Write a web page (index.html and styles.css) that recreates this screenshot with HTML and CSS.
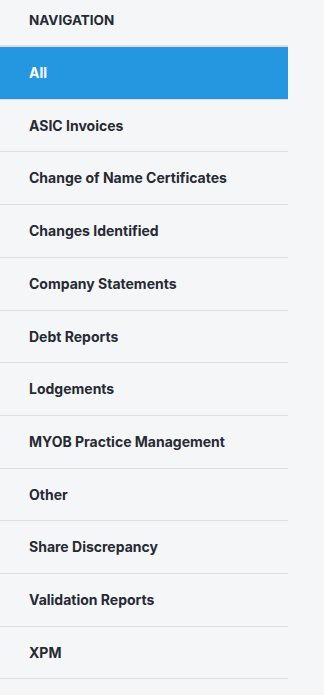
FILE: index.html
```html
<!DOCTYPE html>
<html lang="en">
  <head>
    <meta charset="UTF-8" />
    <title>Navigation</title>
    <link rel="stylesheet" href="styles.css">
  </head>
  <body>
    <div class="sidebar">
      <div class="nav-header">NAVIGATION</div>
      <ul class="nav-list">
        <li class="nav-item active">All</li>
        <li class="nav-item">ASIC Invoices</li>
        <li class="nav-item">Change of Name Certificates</li>
        <li class="nav-item">Changes Identified</li>
        <li class="nav-item">Company Statements</li>
        <li class="nav-item">Debt Reports</li>
        <li class="nav-item">Lodgements</li>
        <li class="nav-item">MYOB Practice Management</li>
        <li class="nav-item">Other</li>
        <li class="nav-item">Share Discrepancy</li>
        <li class="nav-item">Validation Reports</li>
        <li class="nav-item">XPM</li>
      </ul>
    </div>
  </body>
</html>
```

FILE: styles.css
```css
* {
  margin: 0;
  padding: 0;
  box-sizing: border-box;
}

body {
  font-family: Inter, Roboto, "Liberation Sans", sans-serif;
  background-color: #f5f6f8;
  min-height: 100vh;
  color: #262a33;
}

.sidebar {
  width: 288px;
}

.nav-header {
  height: 47px;
  padding: 12px 0 0 29px;
  font-size: 13.5px;
  font-weight: 700;
  line-height: 16px;
  border-bottom: 2px solid #dcdde1;
}

.nav-list {
  list-style: none;
}

.nav-item {
  padding: 16px 0 16px 29px;
  line-height: 19.7px;
  font-size: 14px;
  font-weight: 700;
  border-bottom: 1px solid #dcdde1;
}

.nav-item.active {
  background-color: #2597e0;
  color: white;
}
```
